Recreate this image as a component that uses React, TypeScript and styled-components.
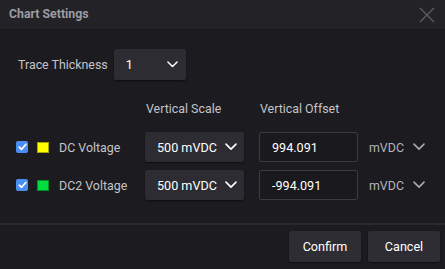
import React from "react";
import styled, { createGlobalStyle } from "styled-components";

const Global = createGlobalStyle`
  html, body { margin: 0; padding: 0; background: #1c1b20; }
  body { font-family: Roboto, "Noto Sans", "Liberation Sans", sans-serif; -webkit-font-smoothing: antialiased; }
  * { box-sizing: border-box; }
`;

const Dialog = styled.div`
  width: 445px;
  height: 269px;
  display: flex;
  flex-direction: column;
  background: #1c1b20;
`;

const Header = styled.div`
  height: 30px;
  flex: none;
  display: flex;
  align-items: center;
  justify-content: space-between;
  padding: 0 9px 1px 9px;
  background: #232227;
  border-bottom: 1px solid #19181c;
`;

const Title = styled.div`
  font-size: 12.3px;
  font-weight: 700;
  color: #9c9ca2;
`;

const Close = styled.button`
  width: 16px;
  height: 16px;
  padding: 0;
  border: 0;
  background: transparent;
  display: flex;
  margin-right: 1px;
  margin-top: 1px;
`;

const Body = styled.div`
  flex: 1;
  padding: 19px 0 0 16px;
`;

const TraceRow = styled.div`
  display: flex;
  align-items: center;
  gap: 6px;
  padding-left: 2px;
`;

const Label = styled.span`
  font-size: 12.4px;
  color: #c4c4c9;
  white-space: nowrap;
`;

const SelectBox = styled.div<{ $w: number; $pad: number }>`
  width: ${(p) => p.$w}px;
  height: 31px;
  display: flex;
  align-items: center;
  justify-content: space-between;
  padding: 0 ${(p) => p.$pad}px 0 12px;
  background: #2c2c32;
  border-radius: 2px;
  box-shadow: 0 1px 2px rgba(0, 0, 0, 0.5);
  font-size: 12.6px;
  color: #ffffff;
`;

const Grid = styled.div`
  display: grid;
  grid-template-columns: 129px 114px 110px auto;
  grid-template-rows: 23px 30px 30px;
  row-gap: 8px;
  margin-top: 21px;
  align-items: center;
`;

const ColHead = styled.div`
  font-size: 12.4px;
  color: #c4c4c9;
  padding-left: 1px;
  align-self: start;
  line-height: 16px;
`;

const Channel = styled.div`
  display: flex;
  align-items: center;
`;

const Check = styled.span`
  width: 12px;
  height: 12px;
  border-radius: 2px;
  background: #4a8ef5;
  display: flex;
  align-items: center;
  justify-content: center;
  margin-right: 9px;
`;

const Swatch = styled.span<{ $c: string }>`
  width: 12px;
  height: 11px;
  background: ${(p) => p.$c};
  border: 1px solid rgba(0, 0, 0, 0.35);
  margin-right: 10px;
`;

const ScaleSelect = styled(SelectBox)`
  height: 30px;
`;

const Input = styled.div`
  width: 99px;
  height: 30px;
  border: 1px solid #3b3b41;
  border-radius: 2px;
  background: #1a191e;
  display: flex;
  align-items: center;
  padding-left: 12px;
  font-size: 12.6px;
  color: #ffffff;
`;

const Unit = styled.div`
  display: flex;
  align-items: center;
  gap: 9px;
  font-size: 12.4px;
  color: #b4b4b9;
`;

const Footer = styled.div`
  flex: none;
  height: 46px;
  border-top: 2px solid #29282d;
  display: flex;
  justify-content: flex-end;
  align-items: flex-start;
  gap: 7px;
  padding: 6px 5px 0 0;
`;

const Button = styled.button`
  width: 72px;
  height: 31px;
  border: 0;
  border-radius: 2px;
  background: #2d2d33;
  box-shadow: 0 1px 2px rgba(0, 0, 0, 0.5);
  color: #ffffff;
  font-family: inherit;
  font-size: 12.6px;
  padding: 0;
`;

const Chevron = ({ w = 12, color = "#ffffff" }: { w?: number; color?: string }) => (
  <svg width={w} height={w * 0.6} viewBox="0 0 12 7" fill="none">
    <path d="M1 1l5 5 5-5" stroke={color} strokeWidth="1.6" strokeLinecap="round" strokeLinejoin="round" />
  </svg>
);

const CheckMark = () => (
  <svg width="9" height="8" viewBox="0 0 9 8" fill="none">
    <path d="M1.3 4.2l2.2 2.2L7.8 1.5" stroke="#fff" strokeWidth="1.7" strokeLinecap="round" strokeLinejoin="round" />
  </svg>
);

const channels = [
  { name: "DC Voltage", color: "#ffff00", offset: "994.091" },
  { name: "DC2 Voltage", color: "#00dd3c", offset: "-994.091" },
];

export default function App() {
  return (
    <>
      <Global />
      <Dialog>
        <Header>
          <Title>Chart Settings</Title>
          <Close aria-label="close">
            <svg width="16" height="16" viewBox="0 0 16 16">
              <path d="M1 1l14 14M15 1L1 15" stroke="#5e5e64" strokeWidth="1.3" />
            </svg>
          </Close>
        </Header>
        <Body>
          <TraceRow>
            <Label>Trace Thickness</Label>
            <SelectBox $w={72} $pad={8}>
              <span>1</span>
              <Chevron w={11} />
            </SelectBox>
          </TraceRow>
          <Grid>
            <div />
            <ColHead>Vertical Scale</ColHead>
            <ColHead>Vertical Offset</ColHead>
            <div />
            {channels.map((c) => (
              <React.Fragment key={c.name}>
                <Channel>
                  <Check>
                    <CheckMark />
                  </Check>
                  <Swatch $c={c.color} />
                  <Label>{c.name}</Label>
                </Channel>
                <ScaleSelect $w={99} $pad={7}>
                  <span>500 mVDC</span>
                  <Chevron w={12} />
                </ScaleSelect>
                <Input>{c.offset}</Input>
                <Unit>
                  <span>mVDC</span>
                  <Chevron w={12} color="#a8a8ad" />
                </Unit>
              </React.Fragment>
            ))}
          </Grid>
        </Body>
        <Footer>
          <Button>Confirm</Button>
          <Button>Cancel</Button>
        </Footer>
      </Dialog>
    </>
  );
}
